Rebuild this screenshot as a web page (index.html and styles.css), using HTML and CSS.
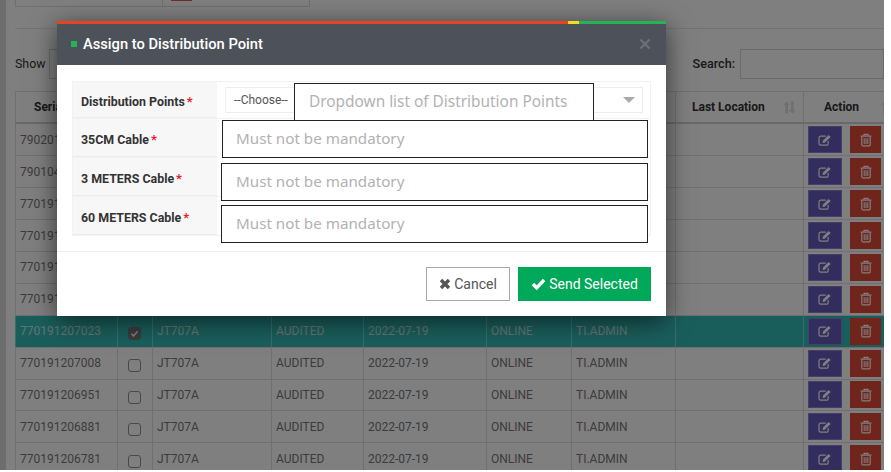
FILE: index.html
```html
<!DOCTYPE html>
<html lang="en">

<head>
    <meta charset="UTF-8">
    <meta name="viewport" content="width=device-width, initial-scale=1.0">
    <title>Assign to Distribution Point</title>
    <link rel="stylesheet" href="styles.css">
</head>

<body>
    <svg class="sprites" width="0" height="0">
        <symbol id="i-edit" viewBox="0 0 14 14">
            <path d="M10.2 8v2.6a1.6 1.6 0 0 1-1.6 1.6H2.6A1.6 1.6 0 0 1 1 10.6V4.8a1.6 1.6 0 0 1 1.6-1.6h5.2" fill="none" stroke="currentColor" stroke-width="1.2"/>
            <path d="M5 7.6 10.6 2l2 2-5.6 5.6-2.4.5z" fill="currentColor"/>
        </symbol>
        <symbol id="i-trash" viewBox="0 0 14 14">
            <path d="M1.6 3.2h10.8M5 3V1.4h4V3" fill="none" stroke="currentColor" stroke-width="1.2"/>
            <path d="M2.8 3.4v8.4a1 1 0 0 0 1 1h6.4a1 1 0 0 0 1-1V3.4" fill="none" stroke="currentColor" stroke-width="1.2"/>
            <path d="M5.2 5.2v5.8M7 5.2v5.8M8.8 5.2v5.8" fill="none" stroke="currentColor" stroke-width="1"/>
        </symbol>
        <symbol id="i-sort" viewBox="0 0 12 12">
            <path d="M2.2 11.6V3.4H.4L3.4.4l3 3H4.6v8.2zM7.4.4h2.4v8.2h1.8l-3 3-3-3h1.8z" fill="currentColor"/>
        </symbol>
    </svg>

    <div class="page">
        <div class="content">
            <div class="top-card">
                <div class="top-cell"></div>
                <div class="top-cell"><span class="top-mark"></span></div>
            </div>
            <div class="divider"></div>

            <div class="toolbar">
                <div class="toolbar-group">
                    <span class="toolbar-label">Show</span>
                    <span class="length-box"></span>
                </div>
                <div class="toolbar-group">
                    <span class="toolbar-label">Search:</span>
                    <span class="search-box"></span>
                </div>
            </div>

            <div class="grid">
                <div class="row head">
                    <div class="cell pad-serial">Serial No</div>
                    <div class="cell"></div>
                    <div class="cell">Model</div>
                    <div class="cell">Status</div>
                    <div class="cell">Date</div>
                    <div class="cell">State</div>
                    <div class="cell">User</div>
                    <div class="cell pad-location">Last Location<svg class="sort"><use href="#i-sort"/></svg></div>
                    <div class="cell pad-action">Action<svg class="sort sort-action"><use href="#i-sort"/></svg></div>
                </div>

                <div class="row">
                    <div class="cell">790201207110</div>
                    <div class="cell"><span class="check"></span></div>
                    <div class="cell">JT707A</div>
                    <div class="cell">AUDITED</div>
                    <div class="cell">2022-07-19</div>
                    <div class="cell">ONLINE</div>
                    <div class="cell">TI.ADMIN</div>
                    <div class="cell"></div>
                    <div class="cell actions">
                        <span class="btn-edit"><svg class="icon"><use href="#i-edit"/></svg></span>
                        <span class="btn-del"><svg class="icon"><use href="#i-trash"/></svg></span>
                    </div>
                </div>
                <div class="row">
                    <div class="cell">790104207096</div>
                    <div class="cell"><span class="check"></span></div>
                    <div class="cell">JT707A</div>
                    <div class="cell">AUDITED</div>
                    <div class="cell">2022-07-19</div>
                    <div class="cell">ONLINE</div>
                    <div class="cell">TI.ADMIN</div>
                    <div class="cell"></div>
                    <div class="cell actions">
                        <span class="btn-edit"><svg class="icon"><use href="#i-edit"/></svg></span>
                        <span class="btn-del"><svg class="icon"><use href="#i-trash"/></svg></span>
                    </div>
                </div>
                <div class="row">
                    <div class="cell">770191207081</div>
                    <div class="cell"><span class="check"></span></div>
                    <div class="cell">JT707A</div>
                    <div class="cell">AUDITED</div>
                    <div class="cell">2022-07-19</div>
                    <div class="cell">ONLINE</div>
                    <div class="cell">TI.ADMIN</div>
                    <div class="cell"></div>
                    <div class="cell actions">
                        <span class="btn-edit"><svg class="icon"><use href="#i-edit"/></svg></span>
                        <span class="btn-del"><svg class="icon"><use href="#i-trash"/></svg></span>
                    </div>
                </div>
                <div class="row">
                    <div class="cell">770191207065</div>
                    <div class="cell"><span class="check"></span></div>
                    <div class="cell">JT707A</div>
                    <div class="cell">AUDITED</div>
                    <div class="cell">2022-07-19</div>
                    <div class="cell">ONLINE</div>
                    <div class="cell">TI.ADMIN</div>
                    <div class="cell"></div>
                    <div class="cell actions">
                        <span class="btn-edit"><svg class="icon"><use href="#i-edit"/></svg></span>
                        <span class="btn-del"><svg class="icon"><use href="#i-trash"/></svg></span>
                    </div>
                </div>
                <div class="row">
                    <div class="cell">770191207049</div>
                    <div class="cell"><span class="check"></span></div>
                    <div class="cell">JT707A</div>
                    <div class="cell">AUDITED</div>
                    <div class="cell">2022-07-19</div>
                    <div class="cell">ONLINE</div>
                    <div class="cell">TI.ADMIN</div>
                    <div class="cell"></div>
                    <div class="cell actions">
                        <span class="btn-edit"><svg class="icon"><use href="#i-edit"/></svg></span>
                        <span class="btn-del"><svg class="icon"><use href="#i-trash"/></svg></span>
                    </div>
                </div>
                <div class="row">
                    <div class="cell">770191207031</div>
                    <div class="cell"><span class="check"></span></div>
                    <div class="cell">JT707A</div>
                    <div class="cell">AUDITED</div>
                    <div class="cell">2022-07-19</div>
                    <div class="cell">ONLINE</div>
                    <div class="cell">TI.ADMIN</div>
                    <div class="cell"></div>
                    <div class="cell actions">
                        <span class="btn-edit"><svg class="icon"><use href="#i-edit"/></svg></span>
                        <span class="btn-del"><svg class="icon"><use href="#i-trash"/></svg></span>
                    </div>
                </div>
                <div class="row selected">
                    <div class="cell">770191207023</div>
                    <div class="cell"><span class="check checked"><svg viewBox="0 0 12 12"><path d="M2.6 6.2 5 8.6l4.4-5" fill="none" stroke="currentColor" stroke-width="1.6"/></svg></span></div>
                    <div class="cell">JT707A</div>
                    <div class="cell">AUDITED</div>
                    <div class="cell">2022-07-19</div>
                    <div class="cell">ONLINE</div>
                    <div class="cell">TI.ADMIN</div>
                    <div class="cell"></div>
                    <div class="cell actions">
                        <span class="btn-edit"><svg class="icon"><use href="#i-edit"/></svg></span>
                        <span class="btn-del"><svg class="icon"><use href="#i-trash"/></svg></span>
                    </div>
                </div>
                <div class="row">
                    <div class="cell">770191207008</div>
                    <div class="cell"><span class="check"></span></div>
                    <div class="cell">JT707A</div>
                    <div class="cell">AUDITED</div>
                    <div class="cell">2022-07-19</div>
                    <div class="cell">ONLINE</div>
                    <div class="cell">TI.ADMIN</div>
                    <div class="cell"></div>
                    <div class="cell actions">
                        <span class="btn-edit"><svg class="icon"><use href="#i-edit"/></svg></span>
                        <span class="btn-del"><svg class="icon"><use href="#i-trash"/></svg></span>
                    </div>
                </div>
                <div class="row">
                    <div class="cell">770191206951</div>
                    <div class="cell"><span class="check"></span></div>
                    <div class="cell">JT707A</div>
                    <div class="cell">AUDITED</div>
                    <div class="cell">2022-07-19</div>
                    <div class="cell">ONLINE</div>
                    <div class="cell">TI.ADMIN</div>
                    <div class="cell"></div>
                    <div class="cell actions">
                        <span class="btn-edit"><svg class="icon"><use href="#i-edit"/></svg></span>
                        <span class="btn-del"><svg class="icon"><use href="#i-trash"/></svg></span>
                    </div>
                </div>
                <div class="row">
                    <div class="cell">770191206881</div>
                    <div class="cell"><span class="check"></span></div>
                    <div class="cell">JT707A</div>
                    <div class="cell">AUDITED</div>
                    <div class="cell">2022-07-19</div>
                    <div class="cell">ONLINE</div>
                    <div class="cell">TI.ADMIN</div>
                    <div class="cell"></div>
                    <div class="cell actions">
                        <span class="btn-edit"><svg class="icon"><use href="#i-edit"/></svg></span>
                        <span class="btn-del"><svg class="icon"><use href="#i-trash"/></svg></span>
                    </div>
                </div>
                <div class="row">
                    <div class="cell">770191206781</div>
                    <div class="cell"><span class="check"></span></div>
                    <div class="cell">JT707A</div>
                    <div class="cell">AUDITED</div>
                    <div class="cell">2022-07-19</div>
                    <div class="cell">ONLINE</div>
                    <div class="cell">TI.ADMIN</div>
                    <div class="cell"></div>
                    <div class="cell actions">
                        <span class="btn-edit"><svg class="icon"><use href="#i-edit"/></svg></span>
                        <span class="btn-del"><svg class="icon"><use href="#i-trash"/></svg></span>
                    </div>
                </div>
            </div>
        </div>

        <div class="backdrop"></div>

        <div class="modal">
            <div class="stripes">
                <span class="stripe-red"></span>
                <span class="stripe-yellow"></span>
                <span class="stripe-green"></span>
            </div>
            <div class="modal-header">
                <h4 class="modal-title"><span class="title-dot"></span>Assign to Distribution Point</h4>
                <svg class="modal-close" viewBox="0 0 12 12"><path d="M1.5 1.5l9 9M10.5 1.5l-9 9" fill="none" stroke="currentColor" stroke-width="2.4"/></svg>
            </div>
            <div class="modal-body">
                <div class="form-row">
                    <div class="form-label">Distribution Points<span class="req">*</span></div>
                    <div class="form-field">
                        <div class="select-box">
                            <span>--Choose--</span>
                            <span class="select-arrow"></span>
                        </div>
                    </div>
                </div>
                <div class="form-row">
                    <div class="form-label">35CM Cable<span class="req">*</span></div>
                    <div class="form-field"></div>
                </div>
                <div class="form-row">
                    <div class="form-label">3 METERS Cable<span class="req">*</span></div>
                    <div class="form-field"></div>
                </div>
                <div class="form-row">
                    <div class="form-label">60 METERS Cable<span class="req">*</span></div>
                    <div class="form-field"></div>
                </div>
            </div>
            <div class="modal-footer">
                <button class="btn btn-cancel" type="button">
                    <svg class="btn-icon" viewBox="0 0 12 12"><path d="M2 2l8 8M10 2l-8 8" fill="none" stroke="currentColor" stroke-width="3.4"/></svg>Cancel
                </button>
                <button class="btn btn-send" type="button">
                    <svg class="btn-icon btn-icon-check" viewBox="0 0 14 12"><path d="M1.4 6 5.2 9.8 12.6 2" fill="none" stroke="currentColor" stroke-width="3.4"/></svg>Send Selected
                </button>
            </div>

            <div class="note note-points">Dropdown list of Distribution Points</div>
            <div class="note note-35cm">Must not be mandatory</div>
            <div class="note note-3m">Must not be mandatory</div>
            <div class="note note-60m">Must not be mandatory</div>
        </div>
    </div>
</body>

</html>
```
FILE: styles.css
```css
body {
    font-family: Roboto, Arial, sans-serif;
    font-size: 12px;
    background-color: white;
    color: #777;
    margin: 0;
}
.sprites {
    display: block;
    height: 0;
}
.page {
    position: relative;
    width: 884px;
    height: 470px;
    overflow: hidden;
    background-color: #dadada;
}
.content {
    margin-left: 6px;
    height: 100%;
    padding-left: 9px;
    background-color: white;
}
.top-card {
    display: flex;
    width: 295px;
    height: 7px;
    border: 1px solid #dedede;
    border-top: none;
    box-sizing: border-box;
}
.top-cell {
    width: 148px;
    padding-left: 8px;
}
.top-cell + .top-cell {
    border-left: 1px solid #dedede;
}
.top-mark {
    display: block;
    width: 21px;
    height: 1px;
    background-color: #e2584e;
}
.divider {
    height: 1px;
    margin-top: 21px;
    background-color: #e6e6e6;
}
.toolbar {
    display: flex;
    justify-content: space-between;
    height: 30px;
    margin-top: 20px;
    color: #333;
}
.toolbar-group {
    display: flex;
    align-items: center;
    gap: 5px;
    font-size: 12.6px;
    font-weight: 500;
}
.toolbar-group:first-child {
    gap: 3px;
    font-size: 12.4px;
    font-weight: 400;
}
.toolbar-label {
    padding-bottom: 2px;
}
.length-box {
    width: 60px;
    height: 30px;
    box-sizing: border-box;
    border: 1px solid #d4d4d4;
}
.search-box {
    width: 144px;
    height: 30px;
    box-sizing: border-box;
    border: 1px solid #d4d4d4;
}
.grid {
    margin-top: 12px;
    width: 869px;
    border-top: 1px solid #dedede;
}
.row {
    display: grid;
    grid-template-columns: 102px 35px 119px 92px 123px 85px 104px 128px 81px;
    height: 31.9px;
    box-sizing: border-box;
    border-bottom: 1px solid #dedede;
}
.head {
    height: 32.4px;
    border-bottom: 2px solid #d2d2d2;
    color: #333;
    font-weight: 700;
}
.cell {
    display: flex;
    align-items: center;
    padding-left: 4px;
    border-left: 1px solid #dedede;
    box-sizing: border-box;
    white-space: nowrap;
    overflow: hidden;
}
.pad-serial {
    padding-left: 18px;
}
.pad-location {
    padding-left: 16px;
    justify-content: space-between;
}
.pad-action {
    padding-left: 20px;
}
.sort {
    width: 13px;
    height: 13px;
    margin-right: 7px;
    color: #dedede;
    flex: none;
}
.sort-action {
    margin: 0 0 0 22px;
}
.check {
    display: block;
    width: 13px;
    height: 13px;
    margin: 5px 0 0 6px;
    border: 1px solid #909090;
    border-radius: 3px;
    box-sizing: border-box;
}
.checked {
    background-color: #777;
    color: white;
    border-color: #777;
}
.checked svg {
    display: block;
    width: 11px;
    height: 11px;
}
.selected {
    background-color: #35bdb7;
    color: #c8e8e6;
}
.selected .cell {
    border-left-color: #6fdcd8;
}
.actions {
    gap: 8px;
}
.btn-edit,
.btn-del {
    display: flex;
    align-items: center;
    justify-content: center;
    height: 27px;
    box-sizing: border-box;
    color: white;
}
.btn-edit {
    width: 34px;
    background-color: #665bbd;
    border: 1px solid #8880d8;
}
.btn-del {
    width: 31px;
    background-color: #e04a38;
}
.icon {
    width: 14px;
    height: 14px;
}

/* dim layer and dialog */
.backdrop {
    position: absolute;
    inset: 0;
    background-color: rgba(0, 0, 0, 0.5);
}
.modal {
    position: absolute;
    left: 57px;
    top: 21px;
    width: 609px;
    height: 295px;
    background-color: white;
    color: #333;
    box-shadow: 0 5px 24px rgba(0, 0, 0, 0.6);
}
.stripes {
    display: flex;
    height: 3px;
}
.stripe-red {
    width: 511px;
    background-color: #e8431f;
}
.stripe-yellow {
    width: 11px;
    background-color: #f2dc1c;
}
.stripe-green {
    flex: 1;
    background-color: #22b455;
}
.modal-header {
    display: flex;
    align-items: center;
    justify-content: space-between;
    height: 41px;
    padding: 0 15px 1px 14px;
    box-sizing: border-box;
    background-color: #4d5159;
    color: white;
}
.modal-title {
    display: flex;
    align-items: center;
    margin: 0;
    font-size: 14.7px;
    font-weight: 500;
}
.title-dot {
    width: 6px;
    height: 6px;
    margin-right: 6px;
    background-color: #22b455;
}
.modal-close {
    width: 12px;
    height: 12px;
    color: #6d7077;
}
.modal-body {
    height: 187px;
    padding: 16px 15px 0;
    box-sizing: border-box;
    border-bottom: 1px solid #eeeeee;
}
.form-row {
    display: flex;
    height: 39px;
    border: 1px solid #f2f2f2;
    border-top: none;
    box-sizing: border-box;
}
.form-row:first-child {
    height: 38px;
    border-top: 1px solid #f2f2f2;
}
.form-label {
    display: flex;
    align-items: center;
    width: 144px;
    padding: 3px 0 0 8px;
    box-sizing: border-box;
    background-color: #f7f7f7;
    border-bottom: 1px solid #ececec;
    font-size: 12.4px;
    font-weight: 700;
}
.req {
    margin-left: 2px;
    font-size: 13px;
    color: #ee1c25;
}
.form-field {
    flex: 1;
    padding: 5px 7px 5px 8px;
}
.select-box {
    display: flex;
    align-items: center;
    justify-content: space-between;
    height: 26px;
    padding: 0 7px 0 8px;
    box-sizing: border-box;
    border: 1px solid #eeeeee;
    color: #555;
}
.select-arrow {
    width: 0;
    height: 0;
    border-left: 6px solid transparent;
    border-right: 6px solid transparent;
    border-top: 6px solid #aaa;
}
.modal-footer {
    display: flex;
    justify-content: flex-end;
    gap: 8px;
    padding: 15px;
}
.btn {
    display: flex;
    align-items: center;
    justify-content: center;
    height: 34px;
    border: 1px solid #a8a8a8;
    font-family: Roboto, Arial, sans-serif;
    font-size: 14px;
    padding: 0;
}
.btn-cancel {
    width: 84px;
    background-color: white;
    color: #555;
}
.btn-send {
    width: 133px;
    background-color: #00a859;
    border-color: #00a859;
    color: white;
}
.btn-icon {
    width: 12px;
    height: 12px;
    margin-right: 3px;
}
.btn-icon-check {
    width: 15px;
}

/* callouts pasted on top of the form */
.note {
    position: absolute;
    display: flex;
    align-items: center;
    box-sizing: border-box;
    height: 38px;
    padding: 0 0 2px 14px;
    border: 1.5px solid #222;
    background-color: white;
    color: #b3b1b3;
    font-family: "Noto Sans", sans-serif;
    font-size: 15.4px;
}
.note-points {
    left: 237px;
    top: 62px;
    width: 300px;
}
.note-35cm {
    left: 165px;
    top: 99px;
    width: 426px;
    padding-left: 13px;
    font-size: 15.2px;
}
.note-3m {
    left: 164px;
    top: 142px;
    width: 427px;
    font-size: 15.2px;
}
.note-60m {
    left: 164px;
    top: 184px;
    width: 427px;
    font-size: 15.2px;
}
```
